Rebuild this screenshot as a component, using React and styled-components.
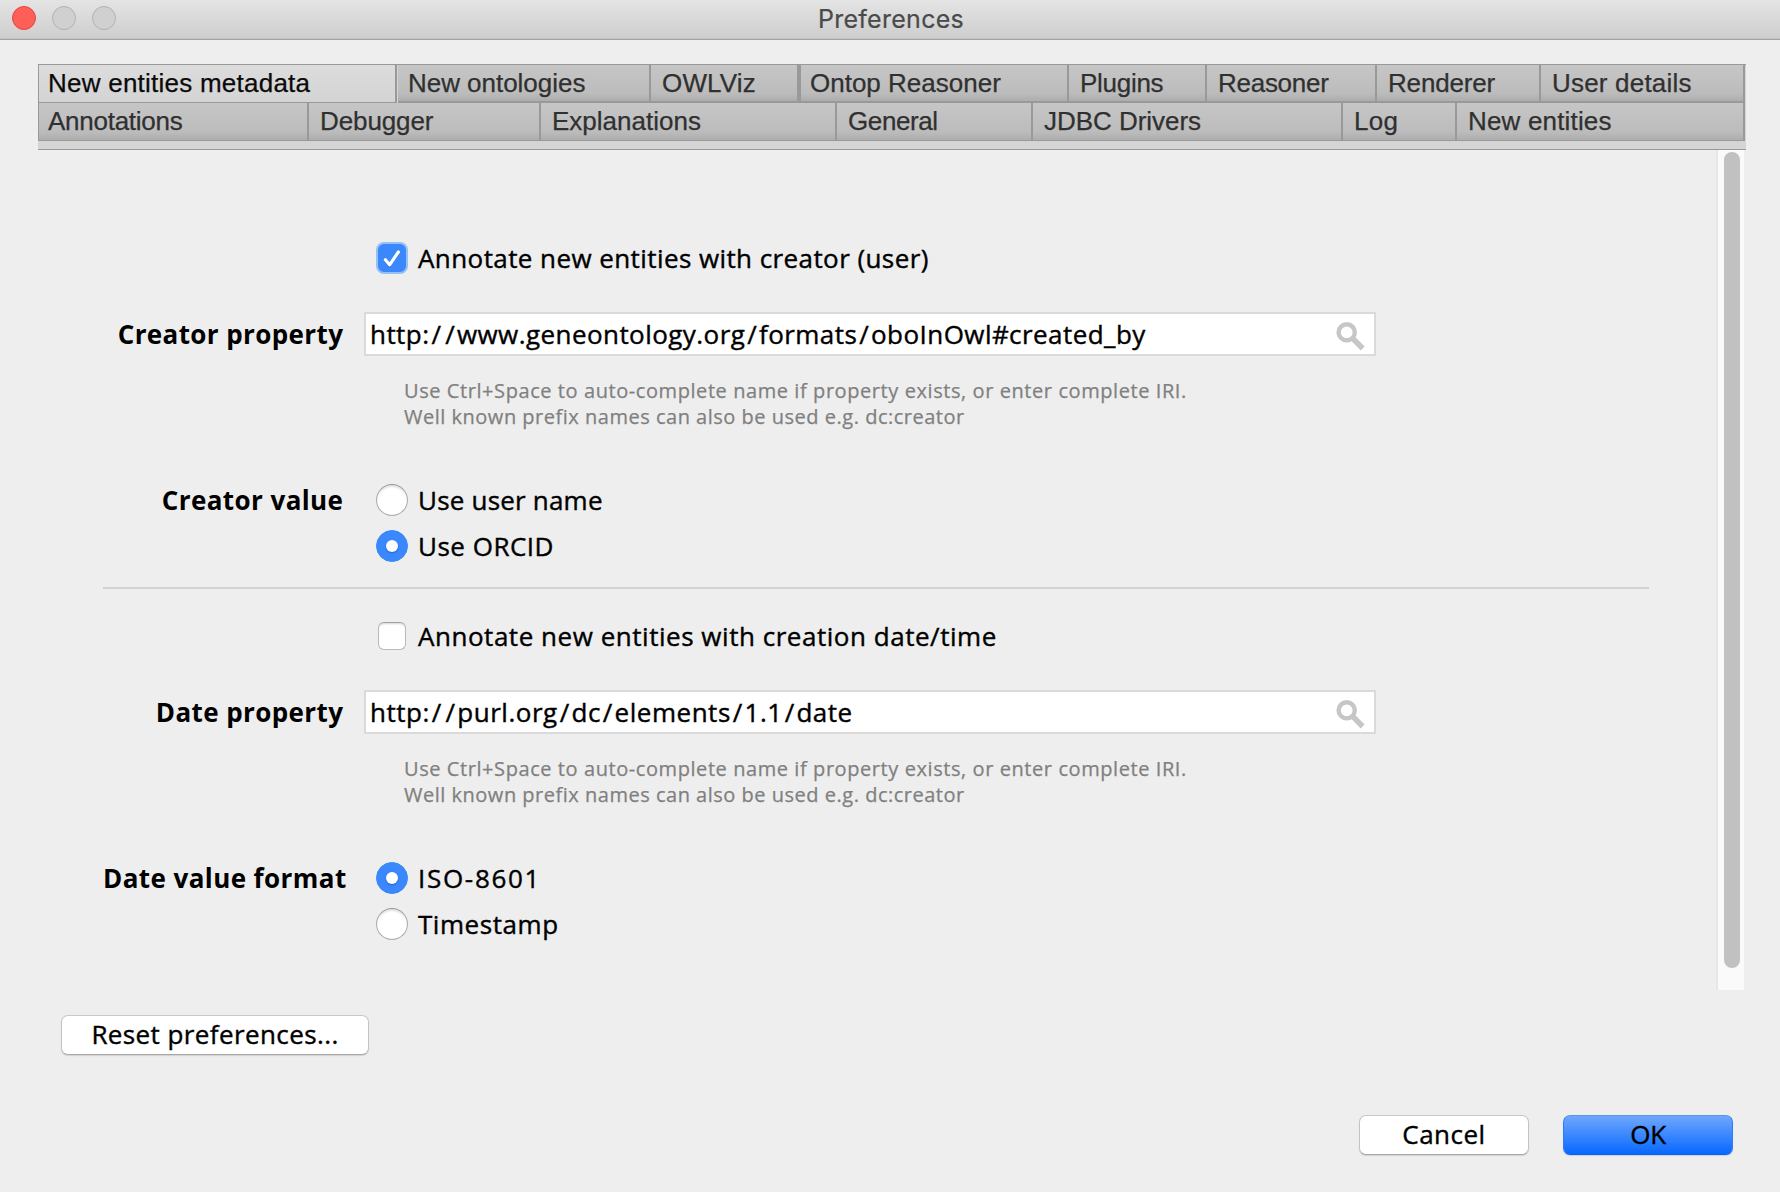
import React from "react";
import styled, { createGlobalStyle } from "styled-components";

const GlobalStyle = createGlobalStyle`
  * { box-sizing: border-box; }
  body { margin: 0; background: #eee; }
`;

const Window = styled.div`
  width: 1780px;
  height: 1192px;
  overflow: hidden;
  background: #eee;
  color: #000;
  font-family: "Open Sans", "Noto Sans", sans-serif;
  font-size: 26px;
  white-space: nowrap;
  display: flex;
  flex-direction: column;
`;

const TitleBar = styled.header`
  height: 40px;
  flex: none;
  display: grid;
  grid-template-columns: 200px 1fr 200px;
  background: linear-gradient(#e4e4e4, #cecece 38px);
  border-bottom: 1px solid #a3a3a3;
  box-shadow: inset 0 -1px 0 #c2c2c2;
`;

const Lights = styled.div`
  display: flex;
  gap: 16px;
  padding: 6px 0 0 12px;
`;

const Light = styled.span`
  width: 24px;
  height: 24px;
  border-radius: 50%;
  border: 1px solid ${(p) => (p.$active ? "#e2463f" : "#b2b2b2")};
  background: ${(p) => (p.$active ? "#ff5f57" : "#d0d0d0")};
`;

const Title = styled.h1`
  margin: 0;
  text-align: center;
  font: 400 25px/38px Inter, sans-serif;
  letter-spacing: 0.28px;
  color: #4a4a4a;
  padding-left: 2px;
  -webkit-text-stroke: 0.2px;
`;

const TabStrip = styled.nav`
  flex: none;
  margin: 24px 34px 0 38px;
  height: 86px;
  background: #d5d5d5;
  border-bottom: 1px solid #999;
  font-family: "Liberation Sans", Arial, sans-serif;
`;

const TabRow = styled.div`
  display: flex;
  height: ${(p) => p.$height}px;
  border-top: ${(p) => (p.$first ? "1px solid #999" : "0")};
  border-left: 1px solid #999;
`;

const Tab = styled.div`
  width: ${(p) => p.$width}px;
  flex: none;
  height: 100%;
  line-height: 37px;
  padding-left: ${(p) => p.$pad}px;
  letter-spacing: ${(p) => p.$track}px;
  color: ${(p) => (p.$selected ? "#0a0a0a" : "#303030")};
  background: ${(p) =>
    p.$selected ? "linear-gradient(#dcdcdc, #d4d4d4)" : "linear-gradient(#c6c6c6, #bcbcbc 78%, #adadad)"};
  border-right: ${(p) => p.$edge || 2}px solid #999;
  border-bottom: ${(p) => (p.$selected ? 1 : p.$rule)}px solid #999;
  box-shadow: ${(p) => (p.$selected ? "1px 0 0 #d6d6d6" : "none")};
  -webkit-text-stroke: 0.25px;
  position: relative;
  z-index: ${(p) => (p.$selected ? 1 : 0)};
`;

const Body = styled.main`
  flex: none;
  height: 840px;
  display: flex;
  margin-right: 36px;
`;

const Form = styled.section`
  width: 1716px;
  padding: 86px 0 0 103px;
`;

const Group = styled.div`
  display: grid;
  grid-template-columns: 240px 1fr;
  grid-template-rows: 44px 32px 44px 20px 52px 56px 46px 46px;
  column-gap: 21px;
  height: 351px;
`;

const Label = styled.div`
  grid-column: 1;
  grid-row: ${(p) => p.$row};
  text-align: right;
  font-weight: 700;
  line-height: ${(p) => p.$line || 44}px;
  letter-spacing: ${(p) => p.$track}px;
  margin-right: ${(p) => -(p.$track + (p.$shift || 0))}px;
`;

const Choice = styled.label`
  grid-column: 2;
  grid-row: ${(p) => p.$row};
  height: 32px;
  margin: ${(p) => p.$top || 0}px 0 0 12px;
  display: flex;
  align-items: center;
  gap: 10px;
  letter-spacing: ${(p) => p.$track}px;
  -webkit-text-stroke: 0.4px;
`;

const BoxSlot = styled.span`
  width: 32px;
  height: 32px;
  display: grid;
  place-items: center;
`;

const Box = styled.span`
  width: ${(p) => (p.$on ? 32 : 28)}px;
  height: ${(p) => (p.$on ? 32 : 28)}px;
  border-radius: ${(p) => (p.$on ? 8 : 6)}px;
  border: ${(p) => (p.$on ? "2px solid #95c1f5" : "1px solid #b9b9b9")};
  border-top-color: ${(p) => (p.$on ? "#95c1f5" : "#a2a2a2")};
  background: ${(p) => (p.$on ? "#3b88fd" : "#fff")};
  box-shadow: ${(p) => (p.$on ? "none" : "inset 0 2px 2px -1px #d5d5d5")};
  display: grid;
  place-items: center;
`;

const Radio = styled.span`
  width: 32px;
  height: 32px;
  border-radius: 50%;
  border: 1px solid ${(p) => (p.$on ? "#3b88fd" : "#adadad")};
  border-top-color: ${(p) => (p.$on ? "#3b88fd" : "#999")};
  background: ${(p) => (p.$on ? "#3b88fd" : "#fff")};
  box-shadow: ${(p) => (p.$on ? "none" : "inset 0 2px 3px -1px #ccc")};
  display: grid;
  place-items: center;
`;

const Dot = styled.span`
  width: 12px;
  height: 12px;
  border-radius: 50%;
  background: #fff;
  box-shadow: 0 1px 2px #1f62c8;
`;

const Field = styled.div`
  grid-column: 2;
  grid-row: 3;
  width: 1012px;
  height: 44px;
  border: 2px solid #dadada;
  background: #fff;
  display: flex;
  justify-content: space-between;
  padding: 0 8px 0 4px;
  line-height: 40px;
`;

const Url = styled.span`
  letter-spacing: ${(p) => p.$track}px;
  -webkit-text-stroke: 0.4px;
`;

const Slash = styled.span`
  letter-spacing: 2.2px;
  padding-left: 2px;
`;

const Hint = styled.p`
  grid-column: 2;
  grid-row: 5;
  margin: 2px 0 0 40px;
  font-size: 20px;
  line-height: 26px;
  color: #808080;
  -webkit-text-stroke: 0.25px;
`;

const HintLine = styled.span`
  display: block;
  letter-spacing: ${(p) => p.$track}px;
`;

const Divider = styled.hr`
  width: 1546px;
  height: 2px;
  margin: 0 0 25px;
  border: 0;
  background: #d2d2d2;
`;

const ScrollTrack = styled.div`
  width: 28px;
  padding: 2px 4px 0 6px;
  background: #fafafa;
  border-left: 2px solid #e7e7e7;
`;

const ScrollThumb = styled.div`
  height: 816px;
  border-radius: 8px;
  background: #c1c1c1;
`;

const Footer = styled.footer`
  padding: 25px 47px 0 61px;
`;

const Actions = styled.div`
  display: flex;
  justify-content: flex-end;
  gap: 34px;
  margin-top: 60px;
`;

const Button = styled.button`
  display: block;
  width: ${(p) => p.$width}px;
  height: 40px;
  padding: 0 0 1px;
  border-radius: 7px;
  border: 1px solid ${(p) => (p.$primary ? "#2f7df2" : "#c4c4c4")};
  border-top-color: ${(p) => (p.$primary ? "#5b96ee" : "#c8c8c8")};
  border-bottom-color: ${(p) => (p.$primary ? "#0a62f0" : "#a9a9a9")};
  background: ${(p) => (p.$primary ? "linear-gradient(#6ea7fd, #0768ff)" : "#fff")};
  box-shadow: 0 1px 1px rgba(0, 0, 0, 0.12);
  font: inherit;
  line-height: 37px;
  color: #000;
  letter-spacing: ${(p) => p.$track}px;
  -webkit-text-stroke: 0.4px;
`;

const SearchIcon = () => (
  <svg width="32" height="40" viewBox="0 0 32 40" fill="none" stroke="#c6c6c6">
    <circle cx="12.7" cy="18.3" r="8.1" strokeWidth="4.4" />
    <path d="M18 23.6 L28.7 34.5" strokeWidth="5.6" />
  </svg>
);

const Check = () => (
  <svg width="28" height="28" viewBox="0 0 28 28" fill="none">
    <path d="M7.4 17 L11.6 22 L20.4 9.2" stroke="#1f66cf" strokeOpacity=".4" strokeWidth="3" strokeLinecap="round" strokeLinejoin="round" />
    <path d="M7.4 15.8 L11.6 20.8 L20.4 8" stroke="#fff" strokeWidth="3.2" strokeLinecap="round" strokeLinejoin="round" />
  </svg>
);

const topTabs = [
  { name: "New entities metadata", width: 358, pad: 9, track: 0.24, selected: true },
  { name: "New ontologies", width: 254, pad: 11, track: -0.03 },
  { name: "OWLViz", width: 150, pad: 11, track: 0.17, edge: 4 },
  { name: "Ontop Reasoner", width: 268, pad: 9, track: 0 },
  { name: "Plugins", width: 138, pad: 11, track: -0.28 },
  { name: "Reasoner", width: 170, pad: 11, track: -0.27 },
  { name: "Renderer", width: 164, pad: 11, track: -0.16 },
  { name: "User details", width: 204, pad: 11, track: 0.2 },
];

const bottomTabs = [
  { name: "Annotations", width: 270, pad: 9, track: -0.26 },
  { name: "Debugger", width: 232, pad: 11, track: -0.1 },
  { name: "Explanations", width: 296, pad: 11, track: 0 },
  { name: "General", width: 196, pad: 11, track: -0.4 },
  { name: "JDBC Drivers", width: 310, pad: 11, track: -0.04 },
  { name: "Log", width: 114, pad: 11, track: 0.3 },
  { name: "New entities", width: 288, pad: 11, track: 0.17 },
];

const Tabs = ({ items, rule }) =>
  items.map((t) => (
    <Tab key={t.name} $width={t.width} $pad={t.pad} $track={t.track} $edge={t.edge} $selected={t.selected} $rule={rule}>
      {t.name}
    </Tab>
  ));

const UrlText = ({ value, track }) => (
  <Url $track={track}>
    {value.split(/(\/)/).map((part, i) => (part === "/" ? <Slash key={i}>/</Slash> : part))}
  </Url>
);

const CheckChoice = ({ on, track, children }) => (
  <Choice $row={1} $top={6} $track={track}>
    <BoxSlot>
      <Box $on={on}>{on && <Check />}</Box>
    </BoxSlot>
    {children}
  </Choice>
);

const RadioChoice = ({ on, row, track, children }) => (
  <Choice $row={row} $track={track}>
    <Radio $on={on}>{on && <Dot />}</Radio>
    {children}
  </Choice>
);

const PropertyGroup = ({ toggle, property, value, options }) => (
  <Group>
    <CheckChoice on={toggle.on} track={toggle.track}>{toggle.text}</CheckChoice>
    <Label $row={3} $track={property.track}>{property.text}</Label>
    <Field>
      <UrlText value={property.url} track={property.urlTrack} />
      <SearchIcon />
    </Field>
    <Hint>
      <HintLine $track={0.575}>Use Ctrl+Space to auto-complete name if property exists, or enter complete IRI.</HintLine>
      <HintLine $track={0.51}>Well known prefix names can also be used e.g. dc:creator</HintLine>
    </Hint>
    <Label $row={7} $line={32} $track={value.track} $shift={value.shift}>{value.text}</Label>
    {options.map((o, i) => (
      <RadioChoice key={o.text} row={7 + i} on={o.on} track={o.track}>{o.text}</RadioChoice>
    ))}
  </Group>
);

export default function App() {
  return (
    <Window>
      <GlobalStyle />
      <TitleBar>
        <Lights>
          <Light $active />
          <Light />
          <Light />
        </Lights>
        <Title>Preferences</Title>
      </TitleBar>
      <TabStrip>
        <TabRow $height={39} $first>
          <Tabs items={topTabs} rule={2} />
        </TabRow>
        <TabRow $height={38}>
          <Tabs items={bottomTabs} rule={1} />
        </TabRow>
      </TabStrip>
      <Body>
        <Form>
          <PropertyGroup
            toggle={{ on: true, text: "Annotate new entities with creator (user)", track: 0.417 }}
            property={{
              text: "Creator property",
              track: 0.39,
              url: "http://www.geneontology.org/formats/oboInOwl#created_by",
              urlTrack: 0.44,
            }}
            value={{ text: "Creator value", track: 0.42 }}
            options={[
              { text: "Use user name", track: 0.2 },
              { text: "Use ORCID", on: true, track: 0.5 },
            ]}
          />
          <Divider />
          <PropertyGroup
            toggle={{ text: "Annotate new entities with creation date/time", track: 0.53 }}
            property={{
              text: "Date property",
              track: 0.4,
              url: "http://purl.org/dc/elements/1.1/date",
              urlTrack: 0.52,
            }}
            value={{ text: "Date value format", track: 0.42, shift: -0.5 }}
            options={[
              { text: "ISO-8601", on: true, track: 1.7 },
              { text: "Timestamp", track: 0.55 },
            ]}
          />
        </Form>
        <ScrollTrack>
          <ScrollThumb />
        </ScrollTrack>
      </Body>
      <Footer>
        <Button $width={308} $track={0.4}>Reset preferences...</Button>
        <Actions>
          <Button $width={170} $track={0.5}>Cancel</Button>
          <Button $width={170} $track={-0.4} $primary>OK</Button>
        </Actions>
      </Footer>
    </Window>
  );
}
